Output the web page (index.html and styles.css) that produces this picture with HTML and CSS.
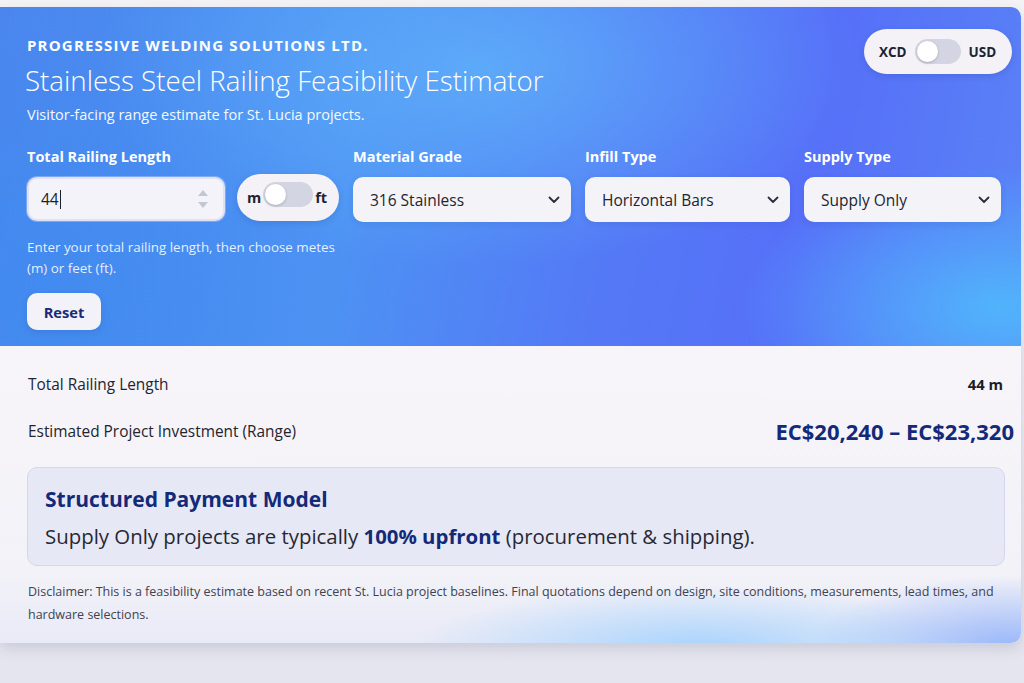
FILE: index.html
```html
<!DOCTYPE html>
<html lang="en">
<head>
<meta charset="utf-8">
<title>Stainless Steel Railing Feasibility Estimator</title>
<link rel="stylesheet" href="styles.css">
</head>
<body>
<main class="card">
  <header class="hero">
    <div class="hero-top">
      <div class="brand">
        <p class="company">PROGRESSIVE WELDING SOLUTIONS LTD.</p>
        <h1 class="title">Stainless Steel Railing Feasibility Estimator</h1>
        <p class="subtitle">Visitor-facing range estimate for St. Lucia projects.</p>
      </div>
      <div class="pill currency">
        <span class="pill-label">XCD</span>
        <span class="track"><span class="knob"></span></span>
        <span class="pill-label">USD</span>
      </div>
    </div>

    <div class="fields">
      <div class="field field-length">
        <label class="label">Total Railing Length</label>
        <div class="length-row">
          <div class="num-input">
            <span class="num-value">44</span><span class="caret"></span>
            <svg class="spin" width="12" height="22" viewBox="0 0 12 22"><path d="M1 8 L6 2 L11 8 Z" fill="#c3c6d3"/><path d="M1 14 L6 20 L11 14 Z" fill="#c3c6d3"/></svg>
          </div>
          <div class="pill unit">
            <span class="pill-label">m</span>
            <span class="track small"><span class="knob"></span></span>
            <span class="pill-label">ft</span>
          </div>
        </div>
        <p class="help">Enter your total railing length, then choose metes (m) or feet (ft).</p>
        <button class="reset">Reset</button>
      </div>
      <div class="field">
        <label class="label">Material Grade</label>
        <div class="select"><span>316 Stainless</span><svg width="12" height="8" viewBox="0 0 12 8"><path d="M1.5 1.5 L6 6 L10.5 1.5" fill="none" stroke="#2b2e3a" stroke-width="1.8" stroke-linecap="round" stroke-linejoin="round"/></svg></div>
      </div>
      <div class="field">
        <label class="label">Infill Type</label>
        <div class="select"><span>Horizontal Bars</span><svg width="12" height="8" viewBox="0 0 12 8"><path d="M1.5 1.5 L6 6 L10.5 1.5" fill="none" stroke="#2b2e3a" stroke-width="1.8" stroke-linecap="round" stroke-linejoin="round"/></svg></div>
      </div>
      <div class="field">
        <label class="label">Supply Type</label>
        <div class="select"><span>Supply Only</span><svg width="12" height="8" viewBox="0 0 12 8"><path d="M1.5 1.5 L6 6 L10.5 1.5" fill="none" stroke="#2b2e3a" stroke-width="1.8" stroke-linecap="round" stroke-linejoin="round"/></svg></div>
      </div>
    </div>
  </header>

  <section class="results">
    <div class="row">
      <span class="row-label">Total Railing Length</span>
      <span class="row-value">44 m</span>
    </div>
    <div class="row row-range">
      <span class="row-label">Estimated Project Investment (Range)</span>
      <span class="range">EC$20,240 – EC$23,320</span>
    </div>
    <div class="payment">
      <h2 class="payment-title">Structured Payment Model</h2>
      <p class="payment-text">Supply Only projects are typically <strong>100% upfront</strong> (procurement &amp; shipping).</p>
    </div>
    <p class="disclaimer">Disclaimer: This is a feasibility estimate based on recent St. Lucia project baselines. Final quotations depend on design, site conditions, measurements, lead times, and hardware selections.</p>
  </section>
</main>
</body>
</html>
```

FILE: styles.css
```css
* { box-sizing: border-box; }
html, body { margin: 0; padding: 0; }
body {
  background: linear-gradient(180deg, #f3f2f5 0%, #eceaf0 60%, #e4e5ee 100%);
  font-family: "Open Sans", "Noto Sans", sans-serif;
  height: 683px;
  overflow: hidden;
  padding-top: 7px;
}
.card {
  width: 1021px;
  border-radius: 0 10px 10px 0;
  overflow: hidden;
  box-shadow: 0 6px 14px rgba(60, 70, 110, 0.16);
  background: #f6f4f9;
}
.hero {
  height: 339px;
  padding: 22px 20px 0 27px;
  color: #fff;
  background:
    radial-gradient(ellipse 260px 140px at 1000px 300px, rgba(80, 185, 252, 0.9), rgba(80, 185, 252, 0) 100%),
    radial-gradient(ellipse 380px 200px at 480px 60px, rgba(95, 175, 250, 0.85), rgba(95, 175, 250, 0) 100%),
    radial-gradient(ellipse 300px 260px at 40px 280px, rgba(60, 140, 240, 0.6), rgba(60, 140, 240, 0) 100%),
    linear-gradient(100deg, #4a86ee 0%, #4d92f3 35%, #5479f6 60%, #5670f8 78%, #5a82f6 100%);
}
.hero-top {
  display: flex;
  justify-content: space-between;
  align-items: flex-start;
}
.brand { padding-top: 7px; }
.company {
  margin: 0;
  font-size: 15px;
  font-weight: 700;
  letter-spacing: 1.2px;
  line-height: 18px;
}
.title {
  margin: 9px 0 0 -2px;
  font-size: 27.7px;
  font-weight: 300;
  line-height: 34px;
  letter-spacing: 0;
}
.subtitle {
  margin: 9px 0 0;
  font-size: 14.5px;
  line-height: 18px;
  opacity: 0.95;
}
.pill {
  display: flex;
  align-items: center;
  background: #f4f2f7;
  border-radius: 999px;
  color: #1f2330;
  font-weight: 700;
  box-shadow: 0 2px 6px rgba(30, 50, 120, 0.18);
}
.currency {
  width: 148px;
  height: 45px;
  margin-right: -11px;
  padding: 0 13px 0 15px;
  gap: 8px;
  font-size: 13.5px;
}
.track {
  position: relative;
  display: block;
  width: 46px;
  height: 25px;
  border-radius: 999px;
  background: #d3d5e2;
  flex: none;
}
.knob {
  position: absolute;
  left: 2px;
  top: 2px;
  width: 21px;
  height: 21px;
  border-radius: 50%;
  background: #fff;
  box-shadow: 0 1px 3px rgba(0, 0, 0, 0.2);
}
.fields {
  display: grid;
  grid-template-columns: 312px 218px 205px 197px;
  column-gap: 14px;
  margin-top: 23px;
}
.label {
  display: block;
  font-size: 14.5px;
  font-weight: 700;
  line-height: 20px;
  margin-bottom: 10px;
}
.length-row {
  display: flex;
  align-items: center;
  gap: 12px;
}
.num-input {
  width: 198px;
  height: 44px;
  border-radius: 10px;
  background: #f4f3f9;
  border: 2px solid #dfe2f5;
  display: flex;
  align-items: center;
  padding: 0 12px;
  font-size: 15.5px;
  color: #1d1f29;
  box-shadow: 0 0 0 1px rgba(180, 195, 240, 0.5);
}
.caret {
  display: inline-block;
  width: 1px;
  height: 19px;
  background: #1d1f29;
  margin-left: 1px;
}
.spin { margin-left: auto; margin-right: 2px; }
.unit {
  width: 102px;
  height: 47px;
  padding: 0 12px 0 10px;
  gap: 2px;
  font-size: 14.5px;
  margin-top: -3px;
}
.track.small {
  width: 50px;
  height: 25px;
  margin-top: -6px;
}
.unit .pill-label:last-child { margin-left: auto; }
.help {
  margin: 16px 0 0;
  font-size: 13.4px;
  line-height: 21px;
  color: rgba(255, 255, 255, 0.88);
  width: 312px;
}
.reset {
  margin-top: 14px;
  width: 74px;
  height: 37px;
  border: none;
  border-radius: 10px;
  background: #f3f2f8;
  color: #172b78;
  font-family: inherit;
  font-size: 14.7px;
  font-weight: 700;
  box-shadow: 0 2px 6px rgba(30, 50, 120, 0.15);
}
.select {
  height: 45px;
  border-radius: 10px;
  background: #f4f3f8;
  display: flex;
  align-items: center;
  justify-content: space-between;
  padding: 0 11px 0 17px;
  font-size: 15.5px;
  color: #22252f;
  box-shadow: 0 2px 6px rgba(30, 50, 120, 0.12);
}
.results {
  position: relative;
  padding: 26px 7px 17px 28px;
  background:
    radial-gradient(ellipse 280px 60px at 700px 300px, rgba(150, 205, 255, 0.75), rgba(150, 205, 255, 0) 100%),
    radial-gradient(ellipse 200px 70px at 1010px 300px, rgba(140, 175, 250, 0.85), rgba(140, 175, 250, 0) 100%),
    linear-gradient(180deg, #f7f5f9 0%, #f3f2f8 75%, #e8eaf7 100%);
}
.row {
  display: flex;
  justify-content: space-between;
  align-items: center;
  padding-right: 11px;
  height: 24px;
}
.row-label {
  font-size: 15.4px;
  color: #23252e;
}
.row-value {
  font-size: 14.8px;
  font-weight: 700;
  color: #1a1d28;
}
.row-range {
  margin-top: 23px;
  padding-right: 0;
}
.range {
  font-size: 22px;
  font-weight: 700;
  color: #142a78;
  letter-spacing: 0;
}
.payment {
  margin: 24px 9px 0 -1px;
  height: 99px;
  border: 1px solid #d4d7ee;
  border-radius: 10px;
  background: #e7e8f6;
  padding: 17px 17px;
}
.payment-title {
  margin: 0;
  font-size: 21px;
  font-weight: 700;
  line-height: 28px;
  color: #142a78;
}
.payment-text {
  margin: 10px 0 0;
  font-size: 20.4px;
  line-height: 26px;
  color: #262833;
}
.payment-text strong { color: #142a78; }
.disclaimer {
  margin: 14px 0 0;
  font-size: 12.5px;
  line-height: 23px;
  color: #3f4250;
}
```
